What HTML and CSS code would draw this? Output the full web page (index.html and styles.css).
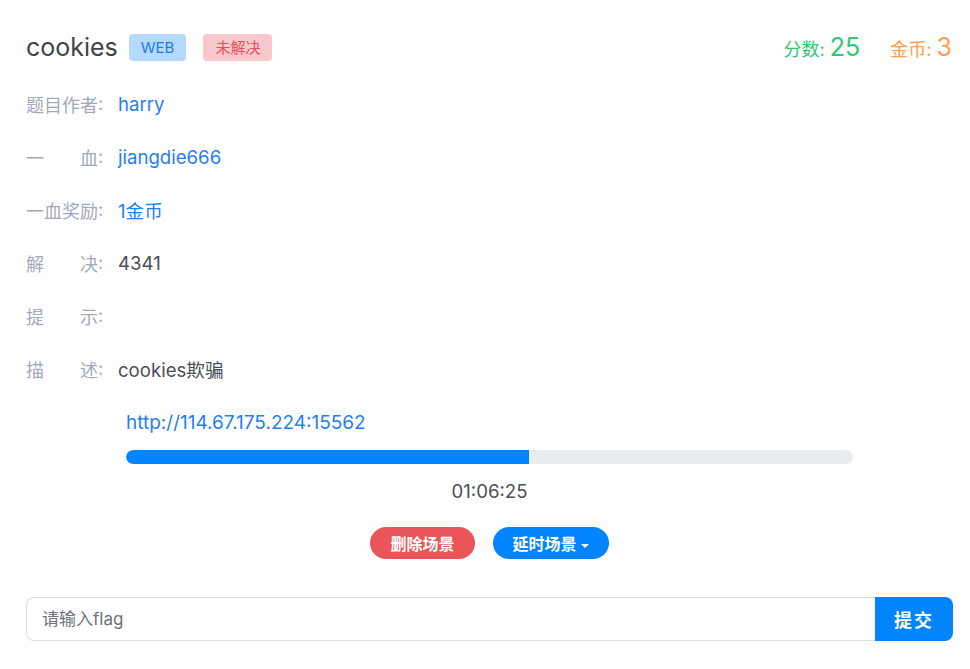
FILE: index.html
```html
<!DOCTYPE html>
<html lang="zh-CN">
<head>
<meta charset="UTF-8">
<meta name="viewport" content="width=device-width, initial-scale=1.0">
<title>cookies</title>
<link rel="stylesheet" href="styles.css">
</head>
<body>

<div class="challenge">
    <div class="header">
        <div class="title">
            <span class="name">cookies</span>
            <span class="badge badge-type">WEB</span>
            <span class="badge badge-state">未解决</span>
        </div>
        <div class="stats">
            <span class="score">分数: <b>25</b></span>
            <span class="coin">金币: <b>3</b></span>
        </div>
    </div>

    <div class="info">
        <div class="row"><span class="label">题目作者</span><span class="colon">:</span><span class="value link">harry</span></div>
        <div class="row"><span class="label">一血</span><span class="colon">:</span><span class="value link">jiangdie666</span></div>
        <div class="row"><span class="label">一血奖励</span><span class="colon">:</span><span class="value link">1金币</span></div>
        <div class="row"><span class="label">解决</span><span class="colon">:</span><span class="value">4341</span></div>
        <div class="row"><span class="label">提示</span><span class="colon">:</span><span class="value"></span></div>
        <div class="row"><span class="label">描述</span><span class="colon">:</span><span class="value">cookies欺骗</span></div>
    </div>

    <div class="scene">
        <a class="scene-url" href="#">http://114.67.175.224:15562</a>
        <div class="progress"><div class="progress-bar" style="width: 55.4%"></div></div>
        <div class="time">01:06:25</div>
        <div class="scene-buttons">
            <button class="pill pill-red">删除场景</button>
            <button class="pill pill-blue">延时场景<span class="caret"></span></button>
        </div>
    </div>

    <div class="flag-form">
        <input class="flag-input" type="text" placeholder="请输入flag">
        <button class="flag-submit">提交</button>
    </div>
</div>

</body>
</html>
```

FILE: styles.css
```css
body {
    margin: 0;
    background: #fff;
    font-family: Inter, "Noto Sans CJK SC", sans-serif;
    color: #4b4f56;
}

.challenge {
    padding: 27px 17px 0 26px;
}

.header {
    display: flex;
    justify-content: space-between;
    align-items: center;
    height: 40px;
}

.title {
    display: flex;
    align-items: center;
}

.name {
    font-size: 25px;
    color: #3f4349;
    margin-right: 11px;
}

.badge {
    display: inline-block;
    height: 27px;
    line-height: 27px;
    padding: 0 12px;
    border-radius: 4px;
    font-size: 15px;
}

.badge-type {
    background: #b6d9ff;
    color: #1a7cf5;
    margin-right: 17px;
}

.badge-state {
    background: #f9c8cc;
    color: #e4505c;
}

.stats {
    display: flex;
    align-items: baseline;
    gap: 30px;
    font-size: 18px;
    margin-right: 1px;
}

.stats b {
    font-weight: 400;
    font-size: 25px;
}

.score {
    color: #2ec973;
}

.coin {
    color: #ff9e48;
}

.info {
    margin-top: 10px;
}

.row {
    display: flex;
    align-items: center;
    height: 53px;
    font-size: 18.6px;
}

.label {
    flex-shrink: 0;
    width: 72px;
    font-size: 18px;
    white-space: nowrap;
    text-align: justify;
    text-align-last: justify;
    color: #a3a8bd;
}

.colon {
    flex-shrink: 0;
    color: #a3a8bd;
    font-size: 18px;
    width: 20px;
}

.value {
    color: #4b4f56;
}

.value.link {
    color: #1f7ff5;
}

.scene {
    padding: 15px 100px 0;
}

.scene-url {
    display: block;
    font-size: 19px;
    line-height: 26px;
    color: #1f7ff5;
    text-decoration: none;
}

.progress {
    margin-top: 14px;
    height: 14px;
    border-radius: 7px;
    background: #e8ebef;
    overflow: hidden;
}

.progress-bar {
    height: 100%;
    background: #0084ff;
    border-radius: 7px 0 0 7px;
}

.time {
    text-align: center;
    font-size: 18.6px;
    line-height: 26px;
    margin-top: 14px;
    color: #4b4f56;
}

.scene-buttons {
    display: flex;
    justify-content: center;
    gap: 18px;
    margin-top: 23px;
}

.pill {
    height: 32px;
    border: 0;
    border-radius: 16px;
    padding: 0 20px;
    font-family: inherit;
    font-size: 16px;
    font-weight: 700;
    color: #fff;
    cursor: pointer;
}

.pill-red {
    background: #e95558;
}

.pill-blue {
    background: #0084ff;
}

.caret {
    display: inline-block;
    margin-left: 4px;
    vertical-align: middle;
    border-top: 4px solid #fff;
    border-left: 4px solid transparent;
    border-right: 4px solid transparent;
}

.flag-form {
    display: flex;
    margin-top: 38px;
    height: 44px;
}

.flag-input {
    flex: 1;
    box-sizing: border-box;
    height: 44px;
    border: 1px solid #dcdfe4;
    border-right: 0;
    border-radius: 8px 0 0 8px;
    padding: 0 15px;
    font-family: inherit;
    font-size: 17px;
    color: #4b4f56;
    outline: none;
}

.flag-input::placeholder {
    color: #6d7178;
}

.flag-submit {
    width: 78px;
    height: 44px;
    border: 0;
    border-radius: 0 8px 8px 0;
    background: #0084ff;
    color: #fff;
    font-family: inherit;
    font-size: 18px;
    font-weight: 700;
    letter-spacing: 2px;
    cursor: pointer;
}
```
